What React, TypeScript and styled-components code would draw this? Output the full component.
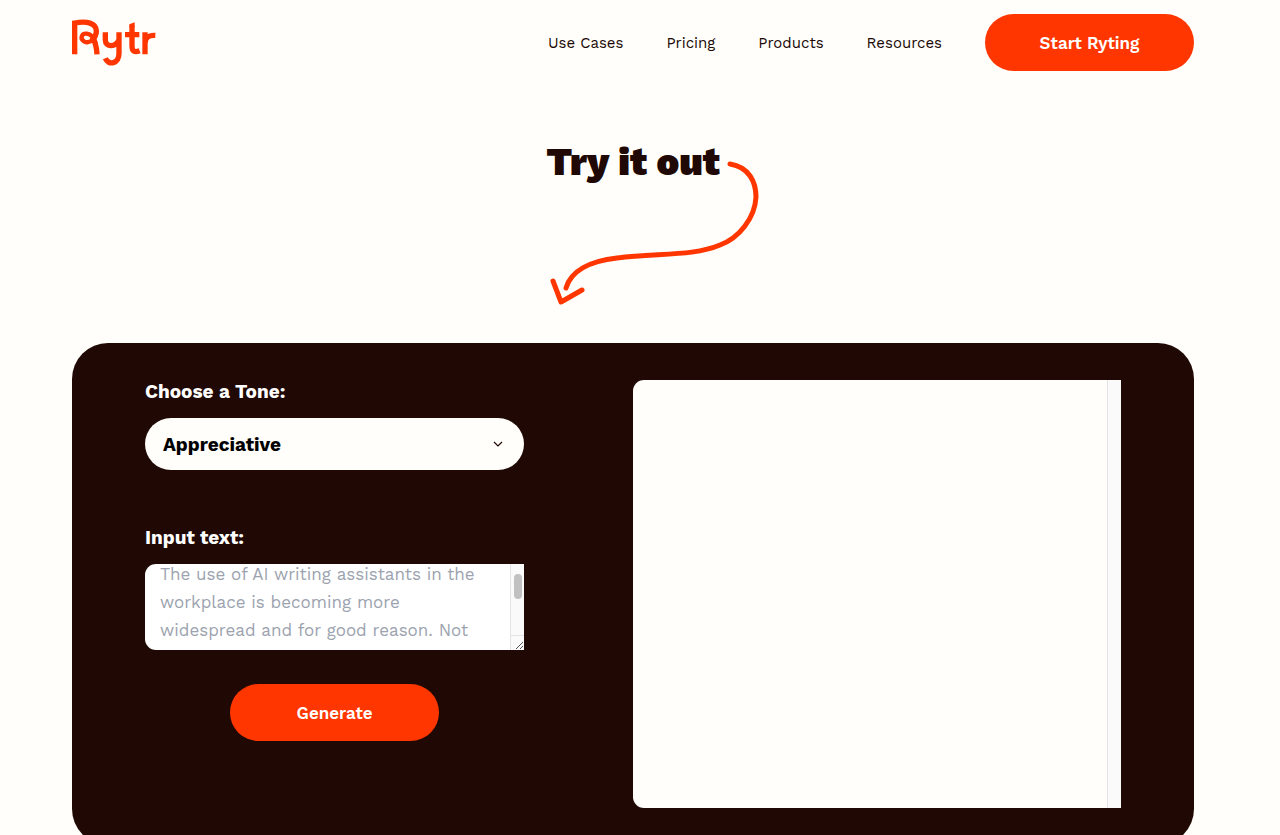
import React, { useEffect, useRef } from "react";
import styled, { createGlobalStyle } from "styled-components";

const color = {
  paper: "#fffefa",
  ink: "#200905",
  accent: "#ff3600",
  muted: "#9ca3af",
  track: "#fafafa",
  line: "#e4e4e8",
};

const GlobalStyle = createGlobalStyle`
  *, *::before, *::after { box-sizing: border-box; }
  body {
    margin: 0;
    background: ${color.paper};
    color: ${color.ink};
    font-family: "Work Sans", Inter, sans-serif;
    overflow-x: hidden;
  }
`;

const Page = styled.div`
  padding: 0 86px 0 72px;
`;

const Header = styled.header`
  display: flex;
  align-items: center;
  justify-content: space-between;
  height: 85px;
`;

const LogoLink = styled.a`
  display: block;
  line-height: 0;
`;

const Nav = styled.nav`
  display: flex;
  align-items: center;
  gap: 43px;
`;

const NavLink = styled.a`
  color: ${color.ink};
  font-size: 15px;
  line-height: 24px;
  text-decoration: none;
`;

const PillButton = styled.button`
  width: 209px;
  height: 57px;
  border: 0;
  border-radius: 29px;
  background: ${color.accent};
  color: #fff;
  font-family: inherit;
  font-size: 17px;
  font-weight: 600;
  line-height: 24px;
  cursor: pointer;
`;

const Hero = styled.section`
  display: flex;
  flex-direction: column;
  align-items: center;
  padding: 53px 0 36px;
`;

const Title = styled.h1`
  margin: 0;
  font-size: 38px;
  font-weight: 900;
  line-height: 48px;
`;

const Arrow = styled.svg`
  display: block;
  margin: -27px 0 0 44px;
`;

const Panel = styled.main`
  display: grid;
  grid-template-columns: 7fr 9fr;
  column-gap: 109px;
  padding: 37px 73px;
  border-radius: 36px;
  background: ${color.ink};
`;

const Form = styled.form`
  display: flex;
  flex-direction: column;
`;

const Field = styled.div<{ $gap: number }>`
  display: flex;
  flex-direction: column;
  gap: 14px;
  margin-bottom: ${(p) => p.$gap}px;
`;

const Label = styled.label`
  color: #fff;
  font-size: 19px;
  font-weight: 700;
  line-height: 24px;
`;

const SelectBox = styled.div`
  display: grid;
  align-items: center;
  & > * { grid-area: 1 / 1; }
  & > svg { justify-self: end; margin-right: 21px; pointer-events: none; }
`;

const Select = styled.select`
  appearance: none;
  width: 100%;
  height: 52px;
  padding: 0 48px 0 18px;
  border: 0;
  border-radius: 26px;
  background: ${color.paper};
  color: #000;
  font-family: inherit;
  font-size: 19px;
  font-weight: 700;
`;

const TextFrame = styled.div`
  display: flex;
  height: 86px;
  border-radius: 11px 0 0 11px;
  background: #fff;
  overflow: hidden;
`;

const TextArea = styled.textarea`
  flex: 1;
  min-width: 0;
  padding: 14px 15px;
  border: 0;
  outline: 0;
  resize: none;
  background: transparent;
  color: ${color.muted};
  font-family: inherit;
  font-size: 17px;
  font-weight: 400;
  line-height: 28px;
  scrollbar-width: none;
`;

const Track = styled.div`
  display: flex;
  flex-direction: column;
  align-items: center;
  width: 14px;
  border-left: 1px solid ${color.line};
  background: ${color.track};
`;

const Thumb = styled.div`
  width: 8px;
  height: 25px;
  margin-top: 10px;
  border-radius: 4px;
  background: #c1c1c1;
`;

const Corner = styled.div`
  display: flex;
  align-items: flex-end;
  justify-content: flex-end;
  width: 100%;
  height: 15px;
  margin-top: auto;
  border-top: 1px solid ${color.line};
`;

const Actions = styled.div`
  display: flex;
  justify-content: center;
`;

const Output = styled.output`
  display: flex;
  justify-content: flex-end;
  height: 428px;
  border-radius: 11px 0 0 11px;
  background: ${color.paper};
  overflow: hidden;
`;

function Logo() {
  return (
    <svg width="84" height="48" viewBox="36 26 252 144" fill="none" stroke={color.accent} strokeWidth="16" aria-hidden="true">
      <path d="M44 132V38C80 31 109 38 109 62C109 76 102 84 94 90" />
      <path strokeWidth="13" d="M109 64C109 88 86 101 72 93C59 85 65 68 80 70C96 72 104 86 108 100" />
      <path d="M98 84C106 96 110 112 111 132" />
      <path d="M136 66V89C136 112 168 111 177 88M177 66V128C177 161 145 167 136 144" />
      <path d="M216 46V106C216 124 224 127 239 121M195 73H238" />
      <path fill={color.accent} stroke="none" d="M208 42L224 36V50H208Z" />
      <path d="M255 66V132M255 100C256 80 266 74 286 75" />
    </svg>
  );
}

export default function App() {
  const area = useRef<HTMLTextAreaElement>(null);

  useEffect(() => {
    if (area.current) area.current.scrollTop = 18;
  }, []);

  return (
    <>
      <GlobalStyle />
      <Page>
        <Header>
          <LogoLink href="#" aria-label="Rytr home">
            <Logo />
          </LogoLink>
          <Nav>
            <NavLink href="#use-cases">Use Cases</NavLink>
            <NavLink href="#pricing">Pricing</NavLink>
            <NavLink href="#products">Products</NavLink>
            <NavLink href="#resources">Resources</NavLink>
            <PillButton type="button">Start Ryting</PillButton>
          </Nav>
        </Header>

        <Hero>
          <Title>Try it out</Title>
          <Arrow width="212" height="148" viewBox="549 159 212 148" fill="none" stroke={color.accent} strokeWidth="5" strokeLinecap="round" strokeLinejoin="round" aria-hidden="true">
            <path d="M730 164C749 167 756 182 756 197C755 218 739 238 720 245C694 256 661 253 617 258C590 261 571 271 566 288" />
            <path d="M553 281L561 302L582 290" />
          </Arrow>
        </Hero>

        <Panel>
          <Form onSubmit={(e) => e.preventDefault()}>
            <Field $gap={56}>
              <Label htmlFor="tone">Choose a Tone:</Label>
              <SelectBox>
                <Select id="tone" defaultValue="Appreciative">
                  <option>Appreciative</option>
                </Select>
                <svg width="10" height="6" viewBox="0 0 10 6" fill="none" stroke="#200905" strokeWidth="1.2" aria-hidden="true">
                  <path d="M1 1L5 5L9 1" />
                </svg>
              </SelectBox>
            </Field>
            <Field $gap={34}>
              <Label htmlFor="source">Input text:</Label>
              <TextFrame>
                <TextArea
                  id="source"
                  ref={area}
                  spellCheck={false}
                  defaultValue={"The use of AI writing assistants in the workplace is becoming more widespread and for good reason. Not\n\n\n"}
                />
                <Track aria-hidden="true">
                  <Thumb />
                  <Corner>
                    <svg width="9" height="9" viewBox="0 0 9 9" stroke="#555" strokeWidth="1">
                      <path d="M1 8L8 1M5 8L8 5" />
                    </svg>
                  </Corner>
                </Track>
              </TextFrame>
            </Field>
            <Actions>
              <PillButton type="submit">Generate</PillButton>
            </Actions>
          </Form>
          <Output htmlFor="tone source">
            <Track aria-hidden="true" />
          </Output>
        </Panel>
      </Page>
    </>
  );
}
